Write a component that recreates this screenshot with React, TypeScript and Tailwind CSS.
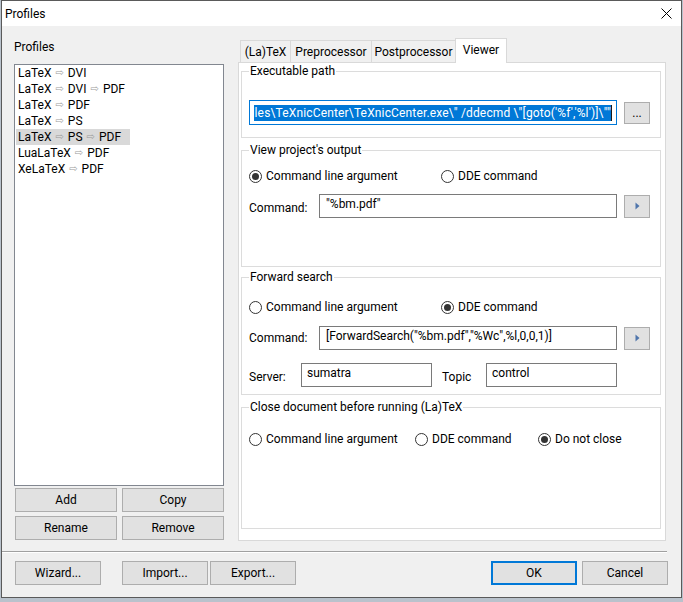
import React from "react";

const EXE = String.raw`"C:\Program Files\TeXnicCenter\TeXnicCenter.exe\" /ddecmd \"[goto('%f','%l')]\""`;

function Radio({ checked, label, w }: { checked?: boolean; label: string; w: string }) {
  return (
    <div className={"flex items-center h-[16px] " + w}>
      <span className="w-[13px] h-[13px] rounded-full border border-[#333333] bg-white flex items-center justify-center shrink-0">
        {checked && <span className="w-[7px] h-[7px] rounded-full bg-[#333333]" />}
      </span>
      <span className="ml-[4px] whitespace-nowrap">{label}</span>
    </div>
  );
}

function Btn({ children, w, primary }: { children: React.ReactNode; w: string; primary?: boolean }) {
  return (
    <div
      className={
        "h-[24px] flex items-center justify-center bg-[#e1e1e1] shrink-0 " +
        w +
        (primary ? " border-2 border-[#0078d7]" : " border border-[#adadad]")
      }
    >
      {children}
    </div>
  );
}

function Arrow() {
  return <span className="font-['DejaVu_Sans',sans-serif] text-[10px] text-[#9a9a9a] mx-[4px]">⇨</span>;
}

function Item({ parts, selected }: { parts: string[]; selected?: boolean }) {
  return (
    <div className="h-[16px] flex items-center">
      <div className={"h-[16px] flex items-center pl-[2px] ml-[1px] " + (selected ? "bg-[#d9d9d9] w-[114px]" : "")}>
        {parts.map((p, i) => (
          <React.Fragment key={i}>
            {i > 0 && <Arrow />}
            <span>{p}</span>
          </React.Fragment>
        ))}
      </div>
    </div>
  );
}

function PlayBtn() {
  return (
    <div className="w-[26px] h-[23px] bg-[#e1e1e1] border border-[#adadad] flex items-center justify-center shrink-0">
      <svg width="5" height="8" viewBox="0 0 5 8">
        <path d="M0.5 0.5 L4.5 4 L0.5 7.5 Z" fill="#4f75ab" />
      </svg>
    </div>
  );
}

function Group({ title, h, mt, children }: { title: string; h: string; mt: string; children: React.ReactNode }) {
  return (
    <fieldset className={"border border-[#dcdcdc] w-[420px] " + h + " " + mt}>
      <legend className="ml-[7px] px-[1px] leading-[16px]">{title}</legend>
      {children}
    </fieldset>
  );
}

export default function App() {
  const items = [
    ["LaTeX", "DVI"],
    ["LaTeX", "DVI", "PDF"],
    ["LaTeX", "PDF"],
    ["LaTeX", "PS"],
    ["LaTeX", "PS", "PDF"],
    ["LuaLaTeX", "PDF"],
    ["XeLaTeX", "PDF"],
  ];
  return (
    <div className="w-[683px] h-[602px] bg-[#b9c2cc] overflow-hidden font-['Roboto',sans-serif] text-[12px] leading-[16px] text-black">
      <div className="ml-[1px] w-[681px] h-[598px] border border-[#5a5a5a] bg-[#f0f0f0] flex flex-col">
        {/* Title bar */}
        <div className="h-[25px] bg-white flex items-center pl-[3px] pr-[9px] shrink-0">
          <span>Profiles</span>
          <div className="flex-1" />
          <svg width="11" height="11" viewBox="0 0 11 11">
            <path d="M0.5 0.5 L10.5 10.5 M10.5 0.5 L0.5 10.5" stroke="#000" strokeWidth="1" />
          </svg>
        </div>

        {/* Body */}
        <div className="flex flex-col">
          <div className="flex pl-[12px]">
            {/* Left column */}
            <div className="w-[210px] pt-[13px] flex flex-col">
              <div className="h-[16px]">Profiles</div>
              <div className="mt-[9px] h-[422px] border border-[#828790] bg-white flex flex-col">
                {items.map((p, i) => (
                  <Item key={i} parts={p} selected={i === 4} />
                ))}
              </div>
              <div className="mt-[2px] flex pl-[1px] gap-[5px]">
                <Btn w="w-[102px]">Add</Btn>
                <Btn w="w-[102px]">Copy</Btn>
              </div>
              <div className="mt-[4px] flex pl-[1px] gap-[5px]">
                <Btn w="w-[102px]">Rename</Btn>
                <Btn w="w-[102px]">Remove</Btn>
              </div>
            </div>

            {/* Right column */}
            <div className="ml-[14px] w-[428px] pt-[12px] flex flex-col">
              <div className="h-[24px] flex items-end pl-[2px]">
                <div className="w-[51px] h-[22px] border border-b-0 border-[#d9d9d9] bg-[#f0f0f0] flex items-center justify-center">(La)TeX</div>
                <div className="-ml-[1px] w-[82px] h-[22px] border border-b-0 border-[#d9d9d9] bg-[#f0f0f0] flex items-center justify-center">Preprocessor</div>
                <div className="-ml-[1px] w-[85px] h-[22px] border border-b-0 border-[#d9d9d9] bg-[#f0f0f0] flex items-center justify-center">Postprocessor</div>
                <div className="-ml-[1px] w-[52px] h-[25px] -mb-[1px] relative z-10 border border-b-0 border-[#d9d9d9] bg-white flex justify-center pt-[3px]">Viewer</div>
              </div>
              <div className="w-[428px] h-[479px] border border-[#d9d9d9] bg-white pl-[2px] flex flex-col">
                <Group title="Executable path" h="h-[75px]" mt="mt-0">
                  <div className="mt-[21px] flex items-start pl-[7px]">
                    <div className="w-[368px] h-[25px] border border-[#0078d7] bg-white flex items-center pl-[4px] pr-[4px] overflow-hidden">
                      <div className="flex-1 min-w-0 overflow-hidden flex justify-end">
                        <span className="whitespace-nowrap bg-[#0078d7] text-white leading-[16px] tracking-[0.15px] shrink-0">{EXE}</span>
                      </div>
                      <span className="w-[1px] h-[16px] bg-[#1a1a1a] shrink-0" />
                    </div>
                    <div className="ml-[7px] mt-[2px] w-[26px] h-[22px] bg-[#e1e1e1] border border-[#adadad] flex items-center justify-center shrink-0">
                      ...
                    </div>
                  </div>
                </Group>

                <Group title="View project's output" h="h-[125px]" mt="mt-[4px]">
                  <div className="mt-[10px] flex pl-[7px]">
                    <Radio checked label="Command line argument" w="w-[192px]" />
                    <Radio label="DDE command" w="w-[150px]" />
                  </div>
                  <div className="mt-[10px] flex items-center pl-[7px]">
                    <div className="w-[70px] pt-[3px]">Command:</div>
                    <div className="w-[298px] h-[24px] border border-[#7a7a7a] bg-white pl-[6px] pt-[1px]">"%bm.pdf"</div>
                    <div className="ml-[7px]">
                      <PlayBtn />
                    </div>
                  </div>
                </Group>

                <Group title="Forward search" h="h-[126px]" mt="mt-[2px]">
                  <div className="mt-[14px] flex pl-[7px]">
                    <Radio label="Command line argument" w="w-[192px]" />
                    <Radio checked label="DDE command" w="w-[150px]" />
                  </div>
                  <div className="mt-[11px] flex items-center pl-[7px]">
                    <div className="w-[70px]">Command:</div>
                    <div className="w-[298px] h-[24px] border border-[#7a7a7a] bg-white pl-[6px] pt-[1px] whitespace-nowrap">
                      [ForwardSearch("%bm.pdf","%Wc",%l,0,0,1)]
                    </div>
                    <div className="ml-[7px]">
                      <PlayBtn />
                    </div>
                  </div>
                  <div className="mt-[13px] flex items-center pl-[7px]">
                    <div className="w-[52px] pt-[3px]">Server:</div>
                    <div className="w-[131px] h-[24px] border border-[#7a7a7a] bg-white pl-[5px] pt-[1px]">sumatra</div>
                    <div className="ml-[10px] w-[44px] pt-[3px]">Topic</div>
                    <div className="w-[131px] h-[24px] border border-[#7a7a7a] bg-white pl-[5px] pt-[1px]">control</div>
                  </div>
                </Group>

                <Group title="Close document before running (La)TeX" h="h-[130px]" mt="mt-[4px]">
                  <div className="mt-[16px] flex pl-[7px]">
                    <Radio label="Command line argument" w="w-[166px]" />
                    <Radio label="DDE command" w="w-[123px]" />
                    <Radio checked label="Do not close" w="w-[120px]" />
                  </div>
                </Group>
              </div>
            </div>
          </div>

          {/* Separator */}
          <div className="mt-[10px] w-[665px] border-t border-[#a0a0a0] border-b border-b-white" />

          {/* Bottom buttons */}
          <div className="mt-[8px] flex pl-[13px]">
            <Btn w="w-[86px]">Wizard...</Btn>
            <div className="ml-[21px]">
              <Btn w="w-[86px]">Import...</Btn>
            </div>
            <div className="ml-[2px]">
              <Btn w="w-[86px]">Export...</Btn>
            </div>
            <div className="ml-[195px]">
              <Btn w="w-[86px]" primary>
                OK
              </Btn>
            </div>
            <div className="ml-[5px]">
              <Btn w="w-[86px]">Cancel</Btn>
            </div>
          </div>
        </div>
      </div>
    </div>
  );
}
